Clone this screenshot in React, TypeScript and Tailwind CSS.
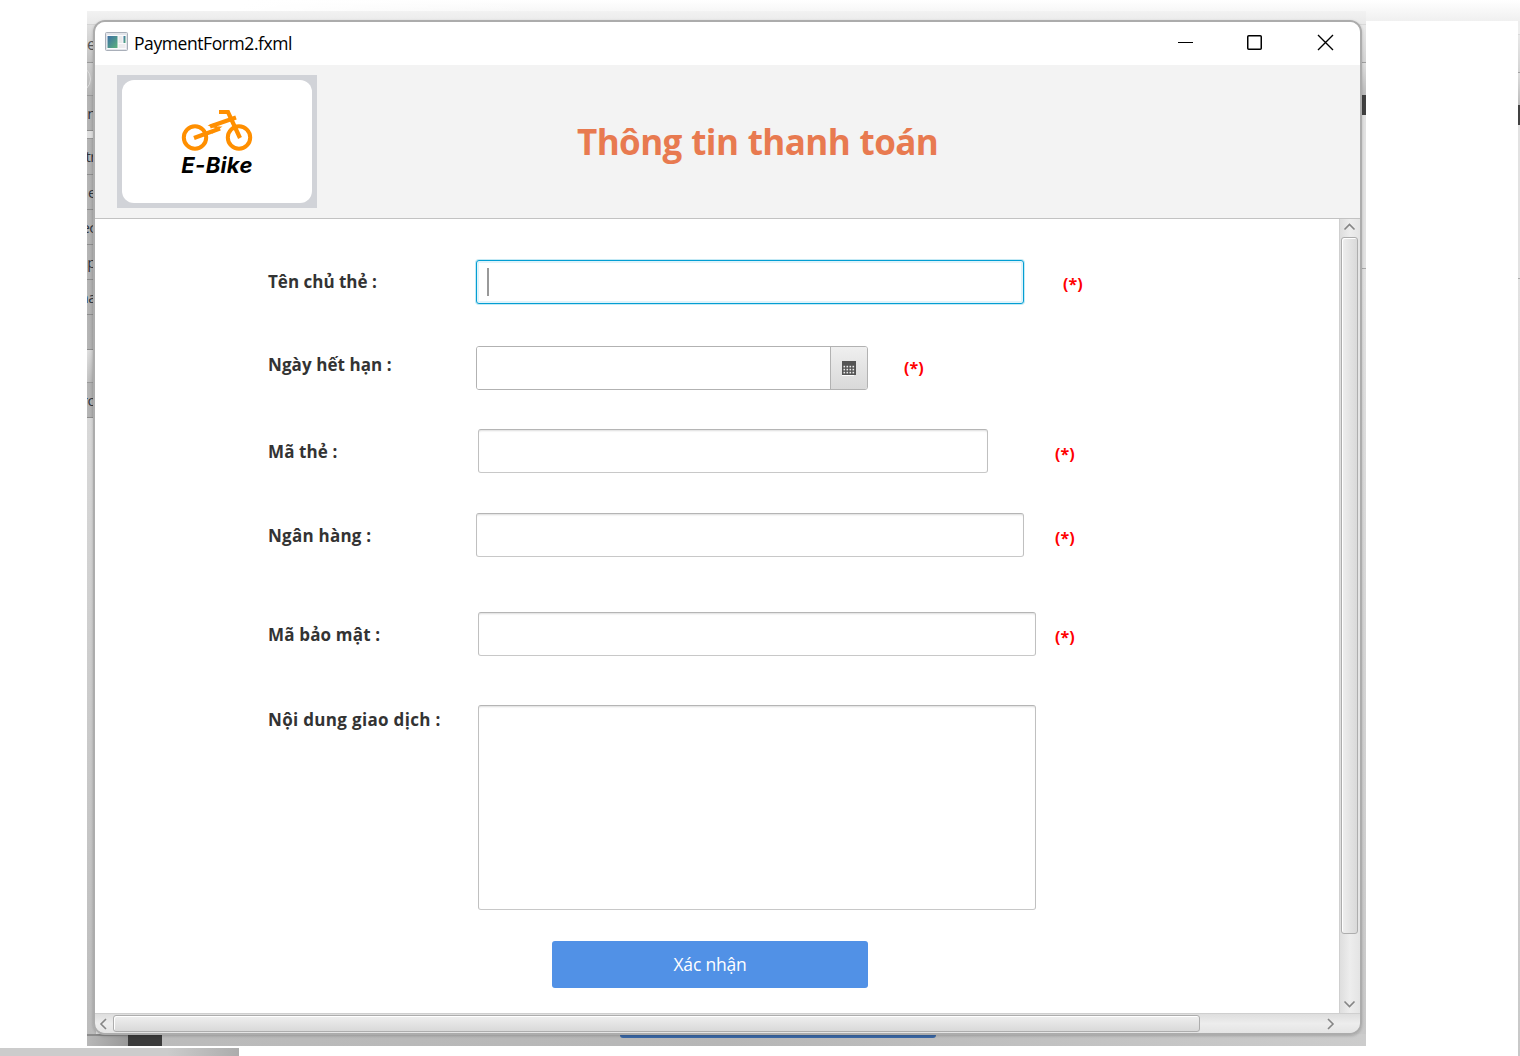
import type { ReactNode } from "react";

const FONT = "font-['Open_Sans','Noto_Sans',sans-serif]";

function Star({ className }: { className: string }) {
  return (
    <span className={`block h-6 shrink-0 text-[16px] leading-6 font-bold whitespace-nowrap text-[#ff0000] ${className}`}>
      (*)
    </span>
  );
}

function Row({ label, spacing, labelStyle, children }: { label: string; spacing: string; labelStyle: string; children: ReactNode }) {
  return (
    <div className={`flex items-start ${spacing}`}>
      <label className={`w-52 shrink-0 text-[17px] leading-6 font-bold whitespace-nowrap text-[#333333] ${labelStyle}`}>{label}</label>
      {children}
    </div>
  );
}

const box =
  "shrink-0 rounded-[3px] border border-t-[#b5b5b5] border-x-[#c0c0c0] border-b-[#c8c8c8] bg-white shadow-[inset_0_2px_2px_-1px_#dedede]";

function Logo() {
  return (
    <div className="flex h-[133px] w-[200px] items-center justify-center bg-[#d1d3d8]">
      <div className="flex h-[123px] w-[190px] flex-col items-center rounded-xl bg-white pt-[28px]">
        <svg width="74" height="44" viewBox="0 0 74 44" fill="none" stroke="#ff8f00" className="ml-[2px] shrink-0">
          <circle cx="14" cy="29.5" r="11.2" strokeWidth="4" />
          <circle cx="58" cy="29.5" r="11.2" strokeWidth="4" />
          <path d="M38 4H47L59 30" strokeWidth="4.2" />
          <path d="M55 9.500L29 18.500" strokeWidth="4.2" />
          <path d="M13 30L39 20.500" strokeWidth="4.2" />
          <path d="M26.500 17.500L38 14L36 18.500L41.500 18.500L31 26L34 20Z" fill="#ff8f00" stroke="none" />
        </svg>
        <span className="mt-[1px] font-['Inter','Open_Sans',sans-serif] text-[22px] leading-6 font-bold tracking-[0.3px] text-black italic">E-Bike</span>
      </div>
    </div>
  );
}

function Chevron({ turn }: { turn: string }) {
  return (
    <svg width="13" height="8" viewBox="0 0 13 8" fill="none" stroke="#858585" strokeWidth="1.6" className={`shrink-0 ${turn}`}>
      <path d="M1.500 6.500L6.500 1.500L11.500 6.500" />
    </svg>
  );
}

function LeftStrip() {
  const cell = "shrink-0 overflow-hidden border-b border-[#8d8d8d] bg-linear-to-r from-[#b6b6b6] to-[#a8a8a8] flex items-center justify-end text-[15px] tracking-[-0.5px] whitespace-nowrap text-[#30343c]";
  return (
    <div className="flex w-[9px] flex-col overflow-hidden">
      <div className="h-[14px] shrink-0 border-b border-[#d4d4d4]" />
      <div className="flex h-[38px] shrink-0 items-center justify-end overflow-hidden border-b border-[#999] bg-linear-to-b from-[#e0e0e0] to-[#c0c0c0] text-[16px] text-[#555]">e</div>
      <div className="h-[33px] shrink-0 overflow-hidden border-b border-[#999] bg-linear-to-b from-[#ccc] to-[#b4b4b4]">
        <div className="mt-0.5 -ml-6 h-7 w-7 rounded-full border border-[#dadada]" />
      </div>
      <div className={`h-[35px] ${cell}`}>n</div>
      <div className="h-[8px] shrink-0 border-b border-[#999] bg-[#dedede]" />
      <div className={`h-[36px] ${cell}`}>tr</div>
      <div className={`h-[35px] ${cell}`}>e</div>
      <div className={`h-[35px] ${cell}`}>ec</div>
      <div className={`h-[35px] ${cell}`}>ap</div>
      <div className={`h-[35px] ${cell}`}>na</div>
      <div className={`h-[35px] ${cell}`} />
      <div className="h-[33px] shrink-0 border-b border-[#999] bg-linear-to-br from-[#e2e2e2] to-[#a8a8a8]" />
      <div className={`h-[35px] ${cell}`}>ro</div>
      <div className="flex-1 bg-linear-to-b from-[#d8d8d8] to-[#bcbcbc]" />
    </div>
  );
}

function RightStrip({ width }: { width: string }) {
  return (
    <div className={`flex flex-col ${width}`}>
      <div className="h-[14px] border-b border-[#d9d9d9]" />
      <div className="h-[38px] border-b border-[#a0a0a0] bg-linear-to-b from-[#e8e8e8] to-[#d4d4d4]" />
      <div className="h-[32px] bg-linear-to-b from-[#dedede] to-[#bcbcbc]" />
      <div className="h-[20px] bg-[#414141]" />
      <div className="h-[154px] border-b border-[#aaa] bg-[#e2e2e2]" />
      <div className="flex-1 bg-linear-to-b from-[#e2e2e2] to-[#c8c8c8]" />
    </div>
  );
}

function BackWindow() {
  return (
    <div className="absolute top-[11px] left-[87px] flex h-[1035px] w-[1279px] flex-col">
      <div className="flex min-h-0 flex-1 justify-between bg-linear-to-b from-[#f2f2f2] from-0% to-[#e4e4e4] to-2%">
        <LeftStrip />
        <RightStrip width="w-[12px]" />
      </div>
      <div className="flex h-[12px] bg-linear-to-r from-[#bcbcbc] via-[#b6b6b6] to-[#cccccc]">
        <div className="w-[41px] border-t-2 border-[#8c8c8c] bg-linear-to-r from-[#b8b8b8] to-[#999]" />
        <div className="w-[34px] bg-[#3b3b3b]" />
        <div className="ml-[458px] h-[4px] w-[316px] rounded-b-[3px] bg-[#3b68a6]" />
      </div>
    </div>
  );
}

function TitleBar() {
  return (
    <div className="flex h-[43px] shrink-0 items-center bg-white">
      <svg width="23" height="19" viewBox="0 0 23 19" className="-mt-[4px] ml-[10px] shrink-0">
        <defs>
          <linearGradient id="pane" x1="0" y1="0" x2="1" y2="1">
            <stop offset="0" stopColor="#3c6ea5" />
            <stop offset="1" stopColor="#5bb37b" />
          </linearGradient>
        </defs>
        <rect x="0.500" y="0.500" width="22" height="18" rx="1" fill="#e3e5ea" stroke="#a9afb9" />
        <rect x="2" y="3" width="19" height="14" fill="#fbfbfc" />
        <rect x="2.500" y="4" width="10" height="12" fill="url(#pane)" />
        <rect x="13.500" y="4" width="4" height="7" fill="#e9e9ea" />
        <rect x="18.500" y="4" width="2" height="7" fill="url(#pane)" />
        <rect x="13.500" y="12" width="7" height="4" fill="#ececee" />
      </svg>
      <span className="-mt-[2px] ml-[6px] text-[17.5px] leading-6 tracking-[-0.42px] text-black">PaymentForm2.fxml</span>
      <div className="mr-[26px] ml-auto flex items-center pb-[2px]">
        <svg width="15" height="15" viewBox="0 0 15 15"><path d="M0 7.500H15" stroke="#000" /></svg>
        <svg width="15" height="15" viewBox="0 0 15 15" className="ml-[54px]"><rect x="0.750" y="0.750" width="13.500" height="13.500" rx="1" fill="none" stroke="#000" strokeWidth="1.5" /></svg>
        <svg width="17" height="17" viewBox="0 0 17 17" className="ml-[55px]"><path d="M1 1L16 16M16 1L1 16" stroke="#000" strokeWidth="1.4" /></svg>
      </div>
    </div>
  );
}

function Calendar() {
  return (
    <svg width="14" height="16" viewBox="0 0 14 16" className="mt-[1px]">
      <rect x="0" y="1" width="12" height="14" fill="#ffffff" />
      <rect x="0" y="0" width="14" height="14" fill="#555555" />
      {[5, 8, 11].map((y) => [1, 4, 7, 10].map((x) => <rect key={`${x}-${y}`} x={x + 0.5} y={y - 0.2} width="1.600" height="1.600" fill="#eeeeee" />))}
    </svg>
  );
}

function Form() {
  return (
    <div className="min-w-0 flex-1 bg-white pt-[41px] pl-[173px]">
      <Row label="Tên chủ thẻ :" spacing="" labelStyle="mt-[10px]">
        <div className="flex h-11 w-[548px] shrink-0 items-center rounded-[3px] border border-[#039ed3] bg-white pl-[10px] shadow-[0_0_0_1px_#c5eaf5,inset_0_0_0_2px_#e0f3fa]">
          <div className="h-7 w-[2px] bg-[#999]" />
        </div>
        <Star className="mt-[12px] ml-[39px]" />
      </Row>
      <Row label="Ngày hết hạn :" spacing="mt-[42px]" labelStyle="mt-[7px] tracking-[0.08px]">
        <div className="flex h-11 w-[392px] shrink-0 overflow-hidden rounded-[3px] border border-[#b2b2b2]">
          <div className="flex-1 bg-white" />
          <div className="flex w-[37px] items-center justify-center border-l border-[#b2b2b2] bg-linear-to-b from-[#efefef] to-[#d9d9d9]">
            <Calendar />
          </div>
        </div>
        <Star className="mt-[10px] ml-[36px]" />
      </Row>
      <Row label="Mã thẻ :" spacing="mt-[39px]" labelStyle="mt-[11px] tracking-[0.1px]">
        <div className={`ml-[2px] h-11 w-[510px] ${box}`} />
        <Star className="mt-[13px] ml-[67px]" />
      </Row>
      <Row label="Ngân hàng :" spacing="mt-[40px]" labelStyle="mt-[11px] tracking-[0.24px]">
        <div className={`h-11 w-[548px] ${box}`} />
        <Star className="mt-[13px] ml-[31px]" />
      </Row>
      <Row label="Mã bảo mật :" spacing="mt-[55px]" labelStyle="mt-[11px] tracking-[0.17px]">
        <div className={`ml-[2px] h-11 w-[558px] ${box}`} />
        <Star className="mt-[13px] ml-[19px]" />
      </Row>
      <Row label="Nội dung giao dịch :" spacing="mt-[49px]" labelStyle="mt-[3px] tracking-[0.32px]">
        <div className={`ml-[2px] h-[205px] w-[558px] ${box}`} />
      </Row>
      <button className="mt-[31px] ml-[284px] block h-[47px] w-[316px] rounded-[3px] bg-[#5191e6] pb-[2px] text-[17.5px] leading-6 tracking-[-0.2px] text-white">Xác nhận</button>
    </div>
  );
}

export default function App() {
  return (
    <div className={`relative h-[1056px] w-[1520px] overflow-hidden bg-white ${FONT}`}>
      <div className="absolute top-0 right-0 h-[21px] w-[1280px] bg-linear-to-b from-white to-[#f0f0f0]">
        <div className="h-full w-[300px] bg-linear-to-r from-white to-transparent" />
      </div>
      <div className="absolute top-[21px] right-0 flex h-[1035px] w-[2px] overflow-hidden bg-[#eeeeee]">
        <RightStrip width="w-full" />
      </div>
      <div className="absolute bottom-0 left-0 h-[8px] w-[239px] bg-linear-to-r from-[#cccccc] from-70% to-[#acacac]" />
      <BackWindow />
      <main className="absolute top-[20px] left-[93px] flex h-[1015px] w-[1269px] flex-col overflow-hidden rounded-[12px] border-2 border-[#acacac] shadow-[0_1px_3px_#00000030]">
        <TitleBar />
        <header className="flex h-[154px] shrink-0 items-start border-b border-[#c2c2c2] bg-[#f3f3f3] pt-[10px] pl-[22px]">
          <Logo />
          <h1 className="mt-[43px] ml-[260px] text-[35px] leading-[48px] font-bold tracking-[-0.6px] [word-spacing:1px] whitespace-nowrap text-[#e87a50]">Thông tin thanh toán</h1>
        </header>
        <div className="flex h-[794px] shrink-0">
          <Form />
          <div className="flex w-[21px] shrink-0 flex-col items-center border-l border-[#cfcfcf] bg-linear-to-r from-[#dedede] via-[#ededed] to-[#e4e4e4] pt-[4px] pr-[2px] pb-[5px]">
            <Chevron turn="" />
            <div className="mt-[6px] h-[697px] w-[17px] rounded-[3px] border border-[#adadad] bg-linear-to-r from-[#efefef] to-[#d9d9d9] shadow-[inset_1px_1px_0_white]" />
            <Chevron turn="mt-auto rotate-180" />
          </div>
        </div>
        <div className="flex flex-1 items-center border-t border-[#cfcfcf] bg-linear-to-b from-[#dedede] via-[#ededed] to-[#e4e4e4] pr-[23px] pl-[2px]">
          <Chevron turn="-rotate-90" />
          <div className="ml-[3px] h-[17px] w-[1087px] rounded-[3px] border border-[#adadad] bg-linear-to-b from-[#efefef] to-[#d9d9d9] shadow-[inset_1px_1px_0_white]" />
          <Chevron turn="ml-auto rotate-90" />
        </div>
      </main>
    </div>
  );
}
